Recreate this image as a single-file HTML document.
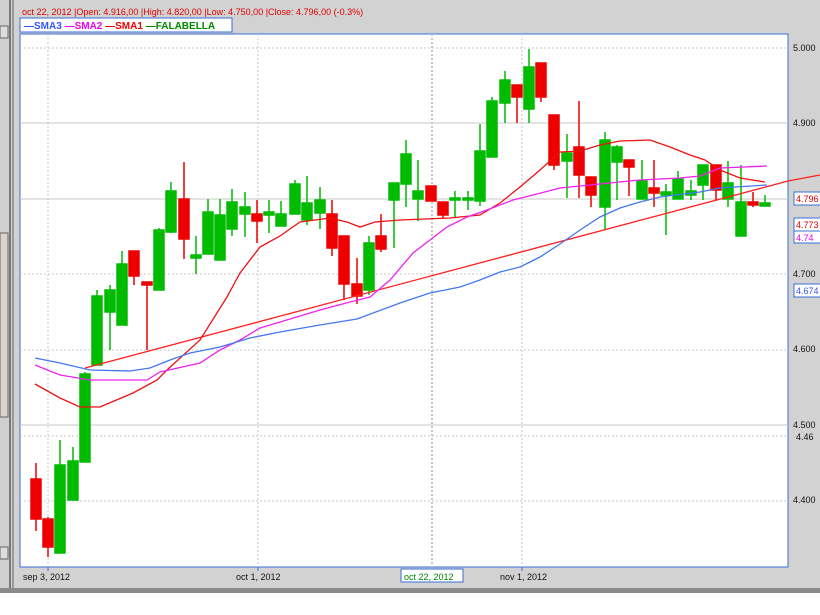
<!DOCTYPE html>
<html><head><meta charset="utf-8"><style>
html,body{margin:0;padding:0;width:820px;height:615px;overflow:hidden;background:#fff;font-family:"Liberation Sans",sans-serif}
</style></head><body>
<svg width="820" height="615" xmlns="http://www.w3.org/2000/svg" style="position:absolute;left:0;top:0" font-family="Liberation Sans, sans-serif">
<rect x="0" y="0" width="820" height="588" fill="#d2d2d2"/>
<rect x="0" y="588" width="820" height="5" fill="#8a8a8a"/>
<rect x="0" y="593" width="820" height="22" fill="#fff"/>
<!-- left scroll -->
<rect x="0" y="0" width="9" height="588" fill="#cfcfcf"/>
<rect x="9" y="0" width="2" height="588" fill="#777"/>
<rect x="12" y="0" width="2" height="588" fill="#999"/>
<rect x="0" y="233" width="8" height="184" fill="#d9d4cc" stroke="#666" stroke-width="1"/>
<rect x="0" y="26" width="8" height="12" fill="#ddd" stroke="#666"/>
<rect x="0" y="547" width="8" height="12" fill="#ddd" stroke="#666"/>
<!-- header -->
<text x="22" y="15" font-size="9" fill="#e00000">oct 22, 2012 |Open: 4.916,00 |High: 4.820,00 |Low: 4.750,00 |Close: 4.796,00 (-0.3%)</text>
<!-- plot -->
<rect x="20" y="34" width="768" height="533" fill="#fff" stroke="#3a6fd8" stroke-width="1"/>
<rect x="20" y="18" width="212" height="14" fill="#fff" stroke="#3a6fd8"/>
<text x="24" y="29" font-size="10" font-weight="bold"><tspan fill="#3355ff">—SMA3</tspan><tspan fill="#ee00ee"> —SMA2</tspan><tspan fill="#ee0000"> —SMA1</tspan><tspan fill="#008800"> —FALABELLA</tspan></text>
<g stroke="#c8c8c8" stroke-width="1">
<line x1="20" x2="788" y1="48" y2="48" stroke-dasharray="2,2"/>
<line x1="20" x2="788" y1="123" y2="123"/>
<line x1="20" x2="788" y1="199" y2="199"/>
<line x1="20" x2="788" y1="274" y2="274" stroke-dasharray="2,2"/>
<line x1="20" x2="788" y1="350" y2="350" stroke-dasharray="2,2"/>
<line x1="20" x2="788" y1="425" y2="425"/>
<line x1="20" x2="788" y1="436" y2="436" stroke-dasharray="2,2"/>
<line x1="20" x2="788" y1="501" y2="501" stroke-dasharray="2,2"/>
<line x1="48" x2="48" y1="34" y2="567" stroke-dasharray="2,2"/>
<line x1="258" x2="258" y1="34" y2="567" stroke-dasharray="2,2"/>
<line x1="432" x2="432" y1="34" y2="567" stroke-dasharray="2,2" stroke-width="2"/>
<line x1="522" x2="522" y1="34" y2="567" stroke-dasharray="2,2"/>
</g>
<!-- candles -->
<g stroke-width="1.5">
<g stroke="#00bb00" fill="#00bb00">
<line x1="60" x2="60" y1="440" y2="553"/><rect x="55" y="465" width="10" height="88"/>
<line x1="73" x2="73" y1="447" y2="500"/><rect x="68" y="461" width="10" height="39"/>
<line x1="85" x2="85" y1="372" y2="462"/><rect x="80" y="374" width="10" height="88"/>
<line x1="97" x2="97" y1="290" y2="365"/><rect x="92" y="296" width="10" height="69"/>
<line x1="110" x2="110" y1="285" y2="350"/><rect x="105" y="290" width="10" height="22"/>
<line x1="122" x2="122" y1="251" y2="325"/><rect x="117" y="264" width="10" height="61"/>
<line x1="159" x2="159" y1="228" y2="290"/><rect x="154" y="230" width="10" height="60"/>
<line x1="171" x2="171" y1="182" y2="233"/><rect x="166" y="191" width="10" height="41"/>
<line x1="196" x2="196" y1="236" y2="274"/><rect x="191" y="255" width="10" height="3"/>
<line x1="208" x2="208" y1="199" y2="254"/><rect x="203" y="212" width="10" height="42"/>
<line x1="220" x2="220" y1="199" y2="260"/><rect x="215" y="215" width="10" height="45"/>
<line x1="232" x2="232" y1="189" y2="236"/><rect x="227" y="202" width="10" height="27"/>
<line x1="245" x2="245" y1="192" y2="237"/><rect x="240" y="207" width="10" height="7"/>
<line x1="269" x2="269" y1="200" y2="233"/><rect x="264" y="212" width="10" height="3"/>
<line x1="281" x2="281" y1="201" y2="226"/><rect x="276" y="214" width="10" height="12"/>
<line x1="295" x2="295" y1="180" y2="214"/><rect x="290" y="184" width="10" height="30"/>
<line x1="307" x2="307" y1="176" y2="225"/><rect x="302" y="203" width="10" height="17"/>
<line x1="320" x2="320" y1="187" y2="229"/><rect x="315" y="200" width="10" height="13"/>
<line x1="369" x2="369" y1="236" y2="295"/><rect x="364" y="243" width="10" height="47"/>
<line x1="394" x2="394" y1="183" y2="248"/><rect x="389" y="183" width="10" height="17"/>
<line x1="406" x2="406" y1="140" y2="207"/><rect x="401" y="154" width="10" height="30"/>
<line x1="418" x2="418" y1="160" y2="221"/><rect x="413" y="191" width="10" height="8"/>
<line x1="455" x2="455" y1="191" y2="218"/><rect x="450" y="198" width="10" height="2"/>
<line x1="468" x2="468" y1="191" y2="210"/><rect x="463" y="198" width="10" height="2"/>
<line x1="480" x2="480" y1="124" y2="206"/><rect x="475" y="151" width="10" height="50"/>
<line x1="492" x2="492" y1="97" y2="157"/><rect x="487" y="101" width="10" height="56"/>
<line x1="505" x2="505" y1="71" y2="123"/><rect x="500" y="80" width="10" height="23"/>
<line x1="529" x2="529" y1="49" y2="123"/><rect x="524" y="67" width="10" height="42"/>
<line x1="567" x2="567" y1="134" y2="198"/><rect x="562" y="153" width="10" height="8"/>
<line x1="605" x2="605" y1="132" y2="230"/><rect x="600" y="140" width="10" height="67"/>
<line x1="617" x2="617" y1="145" y2="200"/><rect x="612" y="147" width="10" height="15"/>
<line x1="642" x2="642" y1="160" y2="199"/><rect x="637" y="181" width="10" height="18"/>
<line x1="666" x2="666" y1="184" y2="235"/><rect x="661" y="192" width="10" height="3"/>
<line x1="678" x2="678" y1="171" y2="199"/><rect x="673" y="179" width="10" height="20"/>
<line x1="691" x2="691" y1="180" y2="200"/><rect x="686" y="191" width="10" height="4"/>
<line x1="703" x2="703" y1="165" y2="200"/><rect x="698" y="165" width="10" height="20"/>
<line x1="728" x2="728" y1="161" y2="207"/><rect x="723" y="183" width="10" height="16"/>
<line x1="741" x2="741" y1="165" y2="236"/><rect x="736" y="202" width="10" height="34"/>
<line x1="765" x2="765" y1="195" y2="206"/><rect x="760" y="203" width="10" height="3"/>
</g>
<g stroke="#ee0000" fill="#ee0000">
<line x1="36" x2="36" y1="463" y2="531"/><rect x="31" y="479" width="10" height="40"/>
<line x1="48" x2="48" y1="517" y2="557"/><rect x="43" y="519" width="10" height="28"/>
<line x1="134" x2="134" y1="251" y2="285"/><rect x="129" y="251" width="10" height="25"/>
<line x1="147" x2="147" y1="282" y2="350"/><rect x="142" y="282" width="10" height="3"/>
<line x1="184" x2="184" y1="162" y2="259"/><rect x="179" y="199" width="10" height="40"/>
<line x1="257" x2="257" y1="200" y2="243"/><rect x="252" y="214" width="10" height="7"/>
<line x1="332" x2="332" y1="200" y2="256"/><rect x="327" y="214" width="10" height="34"/>
<line x1="344" x2="344" y1="236" y2="300"/><rect x="339" y="236" width="10" height="48"/>
<line x1="357" x2="357" y1="258" y2="304"/><rect x="352" y="284" width="10" height="12"/>
<line x1="381" x2="381" y1="214" y2="252"/><rect x="376" y="236" width="10" height="13"/>
<line x1="431" x2="431" y1="186" y2="201"/><rect x="426" y="186" width="10" height="15"/>
<line x1="443" x2="443" y1="202" y2="218"/><rect x="438" y="202" width="10" height="13"/>
<line x1="517" x2="517" y1="85" y2="123"/><rect x="512" y="85" width="10" height="12"/>
<line x1="541" x2="541" y1="63" y2="102"/><rect x="536" y="63" width="10" height="34"/>
<line x1="554" x2="554" y1="115" y2="170"/><rect x="549" y="115" width="10" height="50"/>
<line x1="579" x2="579" y1="101" y2="198"/><rect x="574" y="147" width="10" height="28"/>
<line x1="591" x2="591" y1="177" y2="207"/><rect x="586" y="177" width="10" height="18"/>
<line x1="629" x2="629" y1="160" y2="196"/><rect x="624" y="160" width="10" height="7"/>
<line x1="654" x2="654" y1="160" y2="207"/><rect x="649" y="188" width="10" height="5"/>
<line x1="716" x2="716" y1="165" y2="200"/><rect x="711" y="165" width="10" height="25"/>
<line x1="753" x2="753" y1="192" y2="207"/><rect x="748" y="202" width="10" height="3"/>
</g>
</g>
<!-- indicator lines -->
<g fill="none" stroke-width="1.3">
<polyline stroke="#ff2020" points="85,368 788,181 820,175"/>
<polyline stroke="#ee1111" points="35,384 60,398 80,407 100,407 133,393 157,380 167,370 200,340 227,297 240,273 260,247 280,236 300,222 330,218 347,222 360,227 375,222 400,220 450,218 480,215 500,203 520,187 540,170 560,152 580,151 600,145 620,141 650,140 670,147 690,155 705,160 720,170 740,178 765,182"/>
<polyline stroke="#ee22ee" points="35,365 60,375 90,380 147,380 160,372 200,363 220,350 240,340 260,328 280,322 320,310 350,302 370,297 390,280 413,253 430,240 447,227 467,217 487,210 513,200 533,195 560,188 600,184 640,180 680,178 700,176 720,168 767,166"/>
<polyline stroke="#4477ee" points="35,358 60,363 90,370 130,371 150,368 170,360 190,353 220,347 250,338 280,332 320,325 357,319 400,303 430,293 460,287 480,280 500,272 520,267 540,257 560,244 580,230 600,217 620,208 640,202 660,197 700,192 720,188 767,185"/>
</g>
<!-- right axis -->
<g font-size="9" fill="#111">
<text x="793" y="51">5.000</text>
<text x="793" y="126">4.900</text>
<text x="793" y="277">4.700</text>
<text x="793" y="352">4.600</text>
<text x="793" y="428">4.500</text>
<text x="796" y="440">4.46</text>
<text x="793" y="503">4.400</text>
</g>
<g stroke="#3a6fd8" fill="#fff">
<rect x="794" y="192" width="30" height="13"/>
<rect x="794" y="218" width="30" height="13"/>
<rect x="794" y="231" width="30" height="12"/>
<rect x="794" y="284" width="30" height="13"/>
</g>
<g font-size="9">
<text x="796" y="202" fill="#e00000">4.796</text>
<text x="796" y="228" fill="#e00000">4.773</text>
<text x="796" y="241" fill="#ee00ee">4.74</text>
<text x="796" y="294" fill="#3355ff">4.674</text>
</g>
<!-- bottom axis -->
<g stroke="#3a6fd8"><line x1="48" x2="48" y1="567" y2="571"/><line x1="258" x2="258" y1="567" y2="571"/><line x1="522" x2="522" y1="567" y2="571"/></g>
<g font-size="9" fill="#111">
<text x="23" y="580">sep 3, 2012</text>
<text x="236" y="580">oct 1, 2012</text>
<text x="500" y="580">nov 1, 2012</text>
</g>
<rect x="401" y="569" width="62" height="13" fill="#fff" stroke="#3a6fd8"/>
<text x="404" y="580" font-size="9" fill="#008800">oct 22, 2012</text>
</svg>
</body></html>
